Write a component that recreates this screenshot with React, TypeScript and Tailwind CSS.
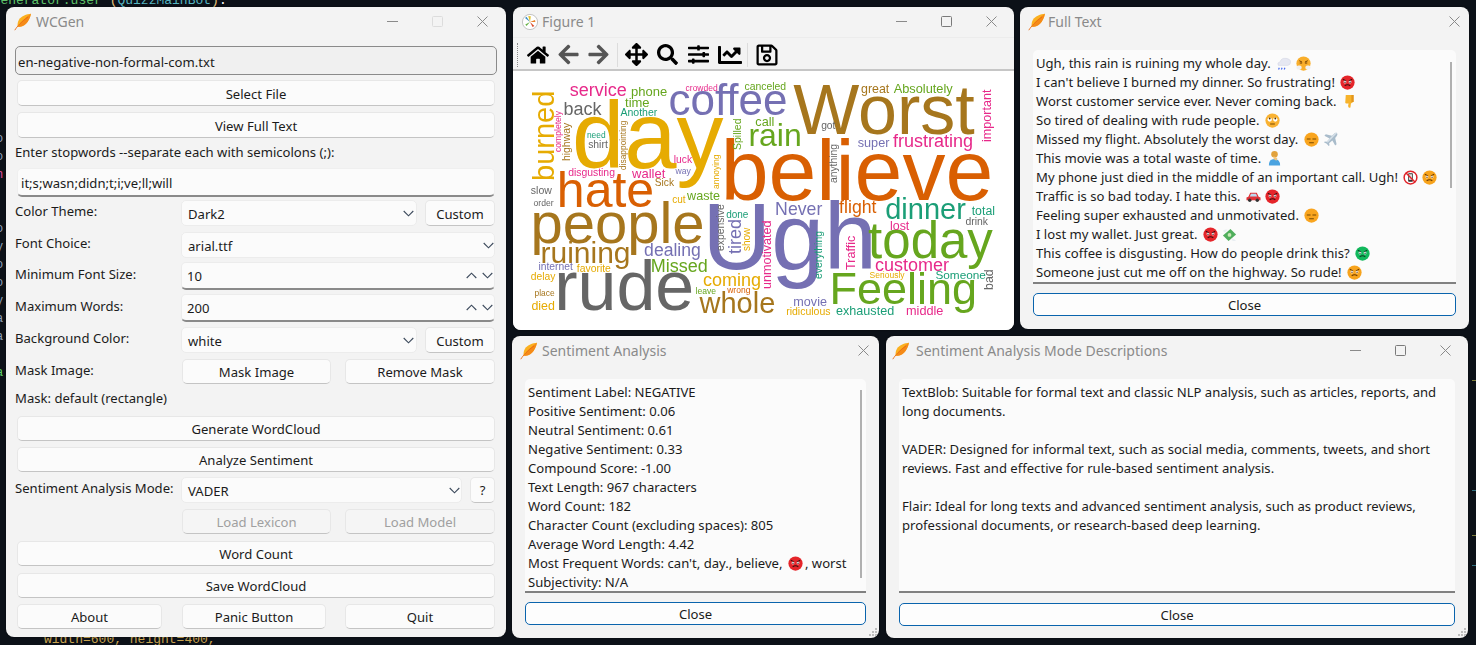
import React from "react";
import { FaHome, FaArrowLeft, FaArrowRight, FaArrowsAlt, FaSearch, FaSlidersH, FaChartLine, FaRegSave } from "react-icons/fa";

const Feather = () => (
  <svg width="18" height="18" viewBox="0 0 18 18" className="shrink-0">
    <path d="M17 .8C12.500 1.200 7.500 2.800 5 6.800 3.600 9.200 3.300 11.500 3.700 13.500 6.200 14.300 9.500 13.300 12 10.800 14.500 8.300 16 4.800 17 .8Z" fill="#fbb01f" />
    <path d="M17 .8C13 3.500 8 8 3.700 13.500 6.200 14.300 9.500 13.300 12 10.800 14.500 8.300 16 4.800 17 .8Z" fill="#f58a18" />
    <path d="M.8 17.200C3 13.500 8 8 14 4" stroke="#ea6a10" strokeWidth="0.9" fill="none" />
  </svg>
);

const MplLogo = () => (
  <svg width="18" height="18" viewBox="0 0 18 18" className="shrink-0">
    <circle cx="9" cy="9" r="7.600" fill="#fff" stroke="#b5b5b5" strokeWidth="0.800" />
    <path d="M9 9 4 5l1.500-1.200Z" fill="#3c8fc4" />
    <path d="M9 9 7.200 3l2.600.200Z" fill="#e2c22d" />
    <path d="M9 9l5-2 .400 2Z" fill="#e9832a" />
    <path d="M9 9l4.400 4-1.800 1Z" fill="#d94a2a" />
    <path d="M9 9l-3.500 4-1.200-1.600Z" fill="#67b346" />
  </svg>
);

const Caption = ({ min, max, maxDim }: { min?: boolean; max?: boolean; maxDim?: boolean }) => (
  <div className="ml-auto flex items-center gap-[34px]">
    {min && <svg width="11" height="11" viewBox="0 0 11 11"><path d="M0 5.500h11" stroke="#8a8a8a" /></svg>}
    {max && (
      <svg width="11" height="11" viewBox="0 0 11 11">
        <rect x="0.500" y="0.500" width="10" height="10" rx="1" fill="none" stroke={maxDim ? "#dcdcdc" : "#7a7a7a"} />
      </svg>
    )}
    <svg width="11" height="11" viewBox="0 0 11 11"><path d="M.5.5l10 10M10.500.5l-10 10" stroke="#8a8a8a" /></svg>
  </div>
);

const Win = ({ className, children }: { className: string; children: React.ReactNode }) => (
  <div className={`absolute overflow-hidden rounded-[8px] bg-[#f3f3f3] shadow-[0_0_2px_rgba(0,0,0,0.5)] ${className}`}>{children}</div>
);

const Btn = ({ className = "", disabled, low, children }: { className?: string; disabled?: boolean; low?: boolean; children: React.ReactNode }) => (
  <div
    className={`flex items-center justify-center rounded-[5px] border border-[#e7e7e7] border-b-[#c4c4c4] ${low ? "pt-[4px]" : "pt-[2px]"} ${disabled ? "bg-[#f5f5f5] text-[#a0a0a0] border-[#dedede]" : "bg-[#fbfbfb] text-[#1b1b1b]"} ${className}`}
  >
    {children}
  </div>
);

const Chevron = ({ up }: { up?: boolean }) => (
  <svg width="11" height="7" viewBox="0 0 11 7" className="shrink-0">
    <path d={up ? "M.7 6 5.500 1.200 10.300 6" : "M.7 1 5.500 5.800 10.300 1"} fill="none" stroke="#3c4a5c" strokeWidth="1.100" />
  </svg>
);

const Combo = ({ className = "", text, chevPad = "pr-[2px]" }: { className?: string; text: string; chevPad?: string }) => (
  <div className={`flex items-center rounded-[5px] border border-[#ececec] bg-[#fbfbfb] pl-[6px] text-[#1b1b1b] ${chevPad} ${className}`}>
    <span className="pt-[4px]">{text}</span>
    <span className="ml-auto"><Chevron /></span>
  </div>
);

const Spin = ({ className = "", text }: { className?: string; text: string }) => (
  <div className={`flex h-[28px] items-center rounded-[5px] border border-[#ececec] border-b-2 border-b-[#8a8a8a] bg-[#fbfbfb] pl-[5px] pr-[1px] text-[#1b1b1b] ${className}`}>
    <span className="pt-[2px]">{text}</span>
    <span className="ml-auto flex items-center gap-[5px]"><Chevron up /><Chevron /></span>
  </div>
);

const Label = ({ children }: { children: React.ReactNode }) => (
  <div className="w-[166px] shrink-0 pb-[2px] text-[#1b1b1b]">{children}</div>
);

const emojiCls = "mx-[2px] inline-block align-[-3px]";

const Face = ({ bg, brow, mouth = "M5 11.500q3-2 6 0", eye = "#3a1010" }: { bg: string; brow?: boolean; mouth?: string; eye?: string }) => (
  <svg width="15" height="15" viewBox="0 0 16 16" className={emojiCls}>
    <circle cx="8" cy="8" r="7.600" fill={bg} />
    {brow && <path d="M3 4.500l3.500 1.800M13 4.500 9.500 6.300" stroke={eye} strokeWidth="1.100" />}
    <circle cx="5.300" cy="7.500" r="1.500" fill="#fff" />
    <circle cx="10.700" cy="7.500" r="1.500" fill="#fff" />
    <circle cx="5.300" cy="7.600" r="0.800" fill={eye} />
    <circle cx="10.700" cy="7.600" r="0.800" fill={eye} />
    <path d={mouth} fill="none" stroke={eye} strokeWidth="1.100" />
  </svg>
);
const Angry = () => <Face bg="#e5252a" brow />;
const Pout = () => <Face bg="#f7a31c" brow eye="#6b3a00" />;
const Sick = () => <Face bg="#12b85c" brow eye="#0d3d22" />;
const Roll = () => (
  <svg width="15" height="15" viewBox="0 0 16 16" className={emojiCls}>
    <circle cx="8" cy="8" r="7.600" fill="#f9b233" />
    <circle cx="5" cy="7" r="2.300" fill="#fff" /><circle cx="11" cy="7" r="2.300" fill="#fff" />
    <circle cx="5" cy="5.800" r="1" fill="#5a3500" /><circle cx="11" cy="5.800" r="1" fill="#5a3500" />
    <path d="M5.500 11.800h5" stroke="#7a4a00" strokeWidth="1.100" />
  </svg>
);
const Tired = () => (
  <svg width="15" height="15" viewBox="0 0 16 16" className={emojiCls}>
    <circle cx="8" cy="8" r="7.600" fill="#f9a51f" />
    <path d="M3 7.500h4M9 7.500h4M5.500 11.500h5" stroke="#7a4a00" strokeWidth="1.100" />
  </svg>
);
const Rain = () => (
  <svg width="16" height="15" viewBox="0 0 16 16" className={emojiCls}>
    <path d="M2 10q-2-3 2-4 1-4 6-3.500 5 .5 5 4 0 3-3 3.500Z" fill="#e6e8f2" stroke="#cfd2e2" strokeWidth="0.500" />
    <path d="M3 12.500l-.8 2M6 12.500l-.8 2M9 12.500l-.8 2" stroke="#4a6ef0" strokeWidth="1.300" />
  </svg>
);
const Steam = () => (
  <svg width="15" height="15" viewBox="0 0 16 16" className={emojiCls}>
    <circle cx="8" cy="8" r="7.600" fill="#f9ae2b" />
    <path d="M3.500 5l3 1.500M12.500 5l-3 1.500M4 7.500h2.500M9.500 7.500H12" stroke="#6b3a00" />
    <rect x="0.500" y="10" width="5.500" height="4.500" rx="2" fill="#f0f0f0" />
    <rect x="10" y="10" width="5.500" height="4.500" rx="2" fill="#f0f0f0" />
  </svg>
);
const Thumb = () => (
  <svg width="15" height="15" viewBox="0 0 16 16" className={emojiCls}>
    <path d="M4 1h8v7.500l-2.500 1.500-.5 4.500q-2.500 1-2.500-2l.5-2.500H4.500Q3 10 3.500 8.500Z" fill="#f7b32b" />
    <path d="M10 1h2.500v7.500H10Z" fill="#e2951c" />
  </svg>
);
const Plane = () => (
  <svg width="15" height="15" viewBox="0 0 16 16" className={emojiCls}>
    <path d="M15 1q-2-.5-3.500 1L9.500 4 3 2.500 1.500 4 7 7l-3 3.500-2-.5L1 11l3 1.500L6 15l1-1-.5-2L10 9l3 5.500 1.500-1.500L13 6.500l1.500-2Q16 3 15 1Z" fill="#a9bccb" />
    <path d="M15 1q-2-.5-3.500 1L4 10.500l1 1Z" fill="#d6e0e8" />
  </svg>
);
const Palm = () => (
  <svg width="15" height="16" viewBox="0 0 16 16" className={emojiCls}>
    <circle cx="8" cy="4" r="3.500" fill="#e2a23c" />
    <path d="M2 16q0-7 6-7t6 7Z" fill="#4aa3e0" />
    <path d="M7 6l4 2-1 3-3-2Z" fill="#f4c77e" />
  </svg>
);
const NoPhone = () => (
  <svg width="15" height="15" viewBox="0 0 16 16" className={emojiCls}>
    <circle cx="8" cy="8" r="6.800" fill="#fff" stroke="#e0242a" strokeWidth="1.600" />
    <rect x="5.500" y="3.500" width="5" height="9" rx="0.800" fill="#333" />
    <rect x="6.300" y="4.500" width="3.400" height="6" fill="#ddd" />
    <path d="M3 3l10 10" stroke="#e0242a" strokeWidth="1.600" />
  </svg>
);
const Car = () => (
  <svg width="15" height="15" viewBox="0 0 16 16" className={emojiCls}>
    <path d="M.5 12V9l2-.8L4.500 4h7l2 4.200 2 .8v3Z" fill="#e0343a" />
    <path d="M5.300 5h5.400l1.300 3H4Z" fill="#bcd9ee" />
    <circle cx="4" cy="12" r="1.800" fill="#333" /><circle cx="12" cy="12" r="1.800" fill="#333" />
  </svg>
);
const Money = () => (
  <svg width="15" height="15" viewBox="0 0 16 16" className={emojiCls}>
    <path d="M1 9l8-7 6 6-8 7Z" fill="#4fae5c" />
    <circle cx="8" cy="8.500" r="2" fill="#c9e8b8" />
    <path d="M1 4q3-2 5-1L3 6Z" fill="#e9eef2" />
    <path d="M11 12q3 1 4 3-3 0-5-1Z" fill="#e9eef2" />
  </svg>
);

const C = { t: "#1b9e77", o: "#d95f02", p: "#7570b3", k: "#e7298a", g: "#66a61e", y: "#e6ab02", b: "#a6761d", a: "#666666" };

// word, ink x and baseline in a 3x picture of the window strip, size, colour, rotated
const words: [string, number, number, number, string, boolean?][] = [
  ["Worst", 860, 402, 70, C.b], ["believe", 645, 598, 86, C.o], ["day", 200, 505, 94, C.y], ["Ugh", 592, 808, 95, C.p],
  ["people", 70, 728, 58, C.b], ["rude", 143, 932, 70, C.a], ["hate", 148, 622, 50, C.o], ["Feeling", 965, 915, 45, C.g],
  ["today", 1082, 775, 51, C.g], ["coffee", 482, 347, 44, C.p], ["rain", 720, 438, 32, C.g], ["ruining", 96, 790, 30, C.b],
  ["whole", 573, 938, 29, C.b], ["dinner", 1130, 657, 29, C.t], ["service", 182, 288, 18, C.k], ["phone", 365, 290, 13, C.g],
  ["time", 347, 323, 13, C.g], ["Another", 333, 347, 10.5, C.t], ["back", 163, 345, 18, C.a], ["crowded", 528, 272, 8.5, C.k],
  ["canceled", 705, 273, 10.4, C.g], ["great", 1055, 280, 12.4, C.b], ["Absolutely", 1153, 280, 12.8, C.g], ["got", 935, 388, 10.3, C.a],
  ["call", 738, 378, 12.7, C.g], ["super", 1045, 442, 12.7, C.p], ["frustrating", 1152, 443, 18, C.k], ["need", 232, 415, 8.4, C.t],
  ["shirt", 236, 446, 10.4, C.a], ["luck", 493, 492, 10.3, C.k], ["way", 498, 522, 8.6, C.p], ["disgusting", 176, 530, 10.4, C.k],
  ["wallet", 368, 535, 13, C.k], ["Sick", 436, 560, 10.2, C.b], ["slow", 64, 582, 10.5, C.a], ["order", 72, 618, 8.6, C.a],
  ["cut", 488, 610, 10, C.y], ["waste", 533, 602, 12.6, C.g], ["Never", 798, 645, 17.7, C.p], ["flight", 990, 640, 17.7, C.o],
  ["done", 650, 655, 10, C.t], ["total", 1387, 646, 12.3, C.t], ["drink", 1368, 677, 10.4, C.a], ["lost", 1142, 690, 12.4, C.k],
  ["dealing", 405, 767, 17.6, C.p], ["Missed", 425, 817, 18, C.g], ["internet", 87, 812, 10.3, C.p], ["favorite", 202, 818, 10.4, C.y],
  ["delay", 64, 842, 10.3, C.y], ["customer", 1098, 813, 18, C.k], ["Seriously", 1080, 833, 8.5, C.y], ["Someone", 1278, 838, 11.8, C.t],
  ["coming", 582, 860, 18, C.y], ["leave", 558, 882, 8.6, C.g], ["wrong", 653, 878, 8.5, C.o], ["place", 75, 888, 8.4, C.b],
  ["died", 66, 930, 12.4, C.y], ["movie", 852, 920, 12.6, C.p], ["ridiculous", 830, 944, 10.5, C.y], ["exhausted", 980, 946, 12.6, C.t],
  ["middle", 1190, 946, 12.7, C.k],
  ["burned", 133, 538, 29, C.y, true], ["completely", 152, 455, 8.6, C.k, true], ["highway", 184, 482, 10.4, C.b, true],
  ["disappointing", 348, 510, 8.4, C.b, true], ["annoying", 628, 566, 8.5, C.y, true], ["Spilled", 692, 447, 10.5, C.g, true],
  ["anything", 984, 547, 10.3, C.a, true], ["important", 1442, 425, 12.6, C.k, true], ["expensive", 645, 752, 10.4, C.a, true],
  ["tired", 693, 760, 18, C.p, true], ["show", 719, 752, 10, C.y, true], ["unmotivated", 783, 865, 12.6, C.k, true],
  ["everything", 938, 835, 10.4, C.t, true], ["Traffic", 1036, 808, 12.6, C.k, true], ["bad", 1450, 867, 12.4, C.a, true],
];

const Cloud = () => (
  <div className="relative flex-1 overflow-hidden bg-white font-['Liberation_Sans',Arial,sans-serif] blur-[0.5px]">
    {words.map(([w, zx, zy, s, c, rot]) => {
      const x = zx / 3 - 3 - (rot ? 0 : s * 0.05);
      const y = zy / 3 - 71 + (rot ? s * 0.05 : 0);
      return (
        <div key={w} className="absolute h-0 w-0 origin-top-left" style={{ left: x, top: y, transform: rot ? "rotate(-90deg)" : undefined }}>
          <span className="absolute left-0 whitespace-nowrap leading-[0]" style={{ top: -0.3465 * s, fontSize: s, color: c }}>{w}</span>
        </div>
      );
    })}
  </div>
);

const Grip = () => (
  <svg width="10" height="10" viewBox="0 0 10 10" className="absolute bottom-[1px] right-[1px]" fill="#bdbdbd">
    <rect x="7" y="1" width="2" height="2" /><rect x="4" y="4" width="2" height="2" /><rect x="7" y="4" width="2" height="2" />
    <rect x="1" y="7" width="2" height="2" /><rect x="4" y="7" width="2" height="2" /><rect x="7" y="7" width="2" height="2" />
  </svg>
);

const CloseBtn = ({ className = "" }: { className?: string }) => (
  <div className={`flex h-[23px] items-center justify-center rounded-[5px] border border-[#0a64ad] bg-[#fdfdfd] pt-[2px] text-[#1b1b1b] ${className}`}>Close</div>
);

const TextBox = ({ className = "", children, bar }: { className?: string; children: React.ReactNode; bar?: string }) => (
  <div className={`relative overflow-hidden rounded-t-[5px] border-b-2 border-b-[#808080] bg-[#fbfbfb] pl-[3px] pt-[4px] leading-[19px] text-[#1b1b1b] ${className}`}>
    {children}
    {bar && <div className={`absolute right-[4px] w-[2px] bg-[#b0b0b0] ${bar}`} />}
  </div>
);

export default function App() {
  return (
    <div className="relative h-[645px] w-[1476px] overflow-hidden bg-[#0c1118] font-['Noto_Sans',sans-serif] text-[13.1px]">
      {/* code editor peeking out behind the windows */}
      <div className="absolute left-[-23px] top-[-9px] whitespace-nowrap font-['Liberation_Mono',monospace] text-[13px] text-[#5fc46a]">
        <span>msGenerator.user</span><span> </span><span className="text-[#e5c07b]">(</span><span className="text-[#56b6c2]">QuizzMainBot</span><span className="text-[#e5c07b]">)</span><span className="text-white">:</span>
      </div>
      <div className="absolute left-[44px] top-[630px] whitespace-nowrap font-['Liberation_Mono',monospace] text-[13px] text-[#c9a34e]">width=600, height=400,</div>
      <div className="absolute left-[-4px] top-[130px] flex flex-col font-['Liberation_Mono',monospace] text-[12px] leading-[18px] text-[#8fa0b8]">
        <span>o</span><span>o</span><span className="text-[#e04c9a]">n</span><span className="h-[36px]" /><span>o</span><span>y</span><span>o</span><span>o</span><span>y</span><span>a</span><span>a</span><span className="h-[18px]" /><span className="text-[#5fd46a]">a</span>
      </div>
      <div className="absolute left-[1472px] top-[380px] h-px w-[4px] bg-[#7d7d3a]" />
      <div className="absolute left-[1472px] top-[490px] h-px w-[4px] bg-[#2f6f7d]" />
      <div className="absolute left-[1472px] top-[535px] h-px w-[4px] bg-[#7d7d3a]" />
      <div className="absolute left-[1472px] top-[565px] h-px w-[4px] bg-[#2f6f7d]" />

      {/* WCGen */}
      <Win className="left-[6px] top-[7px] h-[630px] w-[500px]">
        <div className="flex h-[39px] items-start pl-[8px] pr-[18px] pt-[6px]">
          <Feather />
          <span className="ml-[4px] text-[14px] leading-[18px] text-[#8a8a8a]">WCGen</span>
          <div className="ml-auto pt-[3px]"><Caption min max maxDim /></div>
        </div>
        <div className="flex flex-col pl-[9px] pr-[11px]">
          <div className="-mr-[2px] flex h-[29px] items-center rounded-[5px] border border-[#8a8a8a] bg-[#f0f0f0] pl-[2px] pt-[4px] text-[#1b1b1b]">en-negative-non-formal-com.txt</div>
          <Btn low className="ml-[2px] mt-[5px] h-[26px]">Select File</Btn>
          <Btn low className="ml-[2px] mt-[6px] h-[26px]">View Full Text</Btn>
          <div className="mt-[5px] h-[18px] leading-[18px] text-[#1b1b1b]">Enter stopwords --separate each with semicolons (;):</div>
          <div className="ml-[2px] mt-[7px] flex h-[29px] items-center rounded-[5px] border border-[#efefef] border-b-2 border-b-[#8a8a8a] bg-[#fbfbfb] pl-[3px] pt-[4px] text-[#1b1b1b]">it;s;wasn;didn;t;i;ve;ll;will</div>
          <div className="mt-[3px] flex h-[26px] items-center">
            <Label>Color Theme:</Label>
            <Combo className="h-[26px] w-[236px]" text="Dark2" />
            <Btn low className="ml-[8px] h-[26px] flex-1">Custom</Btn>
          </div>
          <div className="mt-[6px] flex h-[26px] items-center">
            <Label>Font Choice:</Label>
            <Combo className="h-[26px] flex-1" text="arial.ttf" chevPad="pr-[0px]" />
          </div>
          <div className="mt-[4px] flex h-[28px] items-center">
            <Label>Minimum Font Size:</Label>
            <Spin className="flex-1" text="10" />
          </div>
          <div className="mt-[4px] flex h-[28px] items-center">
            <Label>Maximum Words:</Label>
            <Spin className="flex-1" text="200" />
          </div>
          <div className="mt-[5px] flex h-[26px] items-center">
            <Label>Background Color:</Label>
            <Combo className="h-[26px] w-[236px]" text="white" />
            <Btn low className="ml-[8px] h-[26px] flex-1">Custom</Btn>
          </div>
          <div className="mt-[6px] flex h-[25px] items-center">
            <Label>Mask Image:</Label>
            <Btn className="ml-[1px] h-[25px] w-[149px]">Mask Image</Btn>
            <Btn className="ml-[14px] h-[25px] flex-1">Remove Mask</Btn>
          </div>
          <div className="mt-[5px] h-[18px] leading-[18px] text-[#1b1b1b]">Mask: default (rectangle)</div>
          <Btn className="ml-[2px] mt-[9px] h-[25px]">Generate WordCloud</Btn>
          <Btn className="ml-[2px] mt-[6px] h-[25px]">Analyze Sentiment</Btn>
          <div className="mt-[5px] flex h-[26px] items-center">
            <Label>Sentiment Analysis Mode:</Label>
            <Combo className="h-[26px] w-[281px]" text="VADER" chevPad="pr-[1px]" />
            <Btn className="ml-[8px] h-[26px] flex-1">?</Btn>
          </div>
          <div className="mt-[6px] flex h-[25px] items-center">
            <div className="w-[166px] shrink-0" />
            <Btn disabled className="ml-[1px] h-[25px] w-[149px]">Load Lexicon</Btn>
            <Btn disabled className="ml-[14px] h-[25px] flex-1">Load Model</Btn>
          </div>
          <Btn className="ml-[2px] mt-[7px] h-[25px]">Word Count</Btn>
          <Btn className="ml-[2px] mt-[7px] h-[25px]">Save WordCloud</Btn>
          <div className="ml-[2px] mt-[6px] flex h-[25px] items-center">
            <Btn className="h-[25px] w-[145px]">About</Btn>
            <Btn className="ml-[20px] h-[25px] w-[144px]">Panic Button</Btn>
            <Btn className="ml-[19px] h-[25px] flex-1">Quit</Btn>
          </div>
        </div>
      </Win>

      {/* Figure 1 */}
      <Win className="left-[513px] top-[7px] flex h-[323px] w-[501px] flex-col">
        <div className="flex h-[30px] shrink-0 items-start pl-[8px] pr-[17px] pt-[6px]">
          <MplLogo />
          <span className="ml-[3px] text-[14px] leading-[18px] text-[#8a8a8a]">Figure 1</span>
          <div className="ml-auto pt-[3px]"><Caption min max /></div>
        </div>
        <div className="flex h-[34px] shrink-0 items-center border-b-2 border-t border-b-[#c6c6c6] border-t-[#ececec] pl-[4px] pt-[2px]">
          <div className="h-[24px] w-[2px] border-l border-dotted border-[#8a8a8a]" />
          <FaHome className="ml-[8px] text-black" size={22} />
          <FaArrowLeft className="ml-[8px] text-[#555555]" size={23} />
          <FaArrowRight className="ml-[7px] text-[#555555]" size={23} />
          <div className="ml-[7px] h-[24px] w-px bg-[#dcdcdc]" />
          <FaArrowsAlt className="ml-[7px] text-black" size={23} />
          <FaSearch className="ml-[9px] text-black" size={21} />
          <FaSlidersH className="ml-[10px] text-black" size={21} />
          <FaChartLine className="ml-[9px] text-black" size={24} />
          <div className="ml-[5px] h-[24px] w-px bg-[#dcdcdc]" />
          <FaRegSave className="ml-[7px] text-black" size={24} />
        </div>
        <Cloud />
      </Win>

      {/* Full Text */}
      <Win className="left-[1020px] top-[7px] flex h-[322px] w-[449px] flex-col px-[13px]">
        <div className="-mx-[5px] flex h-[43px] shrink-0 items-start pr-[1px] pt-[6px]">
          <Feather />
          <span className="ml-[2px] text-[14px] leading-[18px] text-[#8a8a8a]">Full Text</span>
          <div className="ml-auto pt-[3px]"><Caption /></div>
        </div>
        <TextBox className="h-[234px]" bar="top-[12px] h-[126px]">
          <div className="whitespace-nowrap">Ugh, this rain is ruining my whole day. <Rain /><Steam /></div>
          <div className="whitespace-nowrap">I can't believe I burned my dinner. So frustrating! <Angry /></div>
          <div className="whitespace-nowrap">Worst customer service ever. Never coming back. <Thumb /></div>
          <div className="whitespace-nowrap">So tired of dealing with rude people. <Roll /></div>
          <div className="whitespace-nowrap">Missed my flight. Absolutely the worst day. <Tired /><Plane /></div>
          <div className="whitespace-nowrap">This movie was a total waste of time. <Palm /></div>
          <div className="whitespace-nowrap">My phone just died in the middle of an important call. Ugh! <NoPhone /><Pout /></div>
          <div className="whitespace-nowrap">Traffic is so bad today. I hate this. <Car /><Angry /></div>
          <div className="whitespace-nowrap">Feeling super exhausted and unmotivated. <Tired /></div>
          <div className="whitespace-nowrap">I lost my wallet. Just great. <Angry /><Money /></div>
          <div className="whitespace-nowrap">This coffee is disgusting. How do people drink this? <Sick /></div>
          <div className="whitespace-nowrap">Someone just cut me off on the highway. So rude! <Pout /></div>
        </TextBox>
        <CloseBtn className="mt-[9px]" />
      </Win>

      {/* Sentiment Analysis */}
      <Win className="left-[512px] top-[336px] flex h-[302px] w-[367px] flex-col px-[13px]">
        <div className="-mx-[5px] flex h-[43px] shrink-0 items-start pr-[2px] pt-[6px]">
          <Feather />
          <span className="ml-[4px] text-[14px] leading-[18px] text-[#8a8a8a]">Sentiment Analysis</span>
          <div className="ml-auto pt-[3px]"><Caption /></div>
        </div>
        <TextBox className="h-[214px]" bar="top-[11px] h-[188px]">
          <div>Sentiment Label: NEGATIVE</div>
          <div>Positive Sentiment: 0.06</div>
          <div>Neutral Sentiment: 0.61</div>
          <div>Negative Sentiment: 0.33</div>
          <div>Compound Score: -1.00</div>
          <div>Text Length: 967 characters</div>
          <div>Word Count: 182</div>
          <div>Character Count (excluding spaces): 805</div>
          <div>Average Word Length: 4.42</div>
          <div className="whitespace-nowrap">Most Frequent Words: can't, day., believe, <Angry />, worst</div>
          <div>Subjectivity: N/A</div>
        </TextBox>
        <CloseBtn className="mt-[9px]" />
        <Grip />
      </Win>

      {/* Mode descriptions */}
      <Win className="left-[886px] top-[336px] flex h-[302px] w-[582px] flex-col px-[13px]">
        <div className="-mx-[7px] flex h-[43px] shrink-0 items-start pr-[11px] pt-[6px]">
          <Feather />
          <span className="ml-[6px] text-[14px] leading-[18px] text-[#8a8a8a]">Sentiment Analysis Mode Descriptions</span>
          <div className="ml-auto pt-[3px]"><Caption min max /></div>
        </div>
        <TextBox className="h-[214px]">
          <div className="w-[540px]">TextBlob: Suitable for formal text and classic NLP analysis, such as articles, reports, and long documents.</div>
          <div className="mt-[19px] w-[540px]">VADER: Designed for informal text, such as social media, comments, tweets, and short reviews. Fast and effective for rule-based sentiment analysis.</div>
          <div className="mt-[19px] w-[540px]">Flair: Ideal for long texts and advanced sentiment analysis, such as product reviews, professional documents, or research-based deep learning.</div>
        </TextBox>
        <CloseBtn className="mt-[10px]" />
        <Grip />
      </Win>
    </div>
  );
}
